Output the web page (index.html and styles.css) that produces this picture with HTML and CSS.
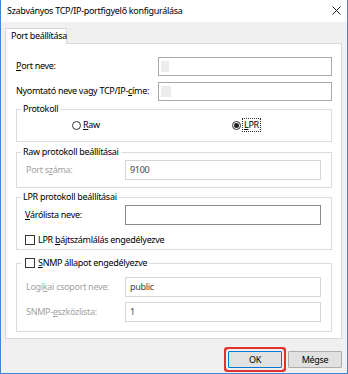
FILE: index.html
```html
<!DOCTYPE html>
<html lang="hu">
<head>
    <meta charset="UTF-8">
    <title>Szabványos TCP/IP-portfigyelő konfigurálása</title>
    <link rel="stylesheet" href="styles.css">
</head>
<body>

<div class="window">
    <div class="titlebar">
        <span class="title">Szabványos TCP/IP-portfigyelő konfigurálása</span>
        <svg class="close" width="9" height="9" viewBox="0 0 9 9">
            <path d="M0.5 0.5 L8.5 8.5 M8.5 0.5 L0.5 8.5" stroke="#222" stroke-width="1" fill="none"/>
        </svg>
    </div>

    <div class="content">
        <div class="tabs">
            <div class="tab">Port beállítása</div>
        </div>

        <div class="panel">
            <div class="top-row">
                <span class="label"><u>P</u>ort neve:</span>
                <div class="field"><span class="blur"></span></div>
            </div>
            <div class="top-row">
                <span class="label">Nyomtató neve vagy TCP/IP-<u>c</u>íme:</span>
                <div class="field"><span class="blur wide"></span></div>
            </div>

            <fieldset class="group g-proto">
                <legend>Protokoll</legend>
                <div class="radios">
                    <span class="radio-item"><span class="radio"></span><span><u>R</u>aw</span></span>
                    <span class="radio-item"><span class="radio checked"></span><span class="focus"><u>L</u>PR</span></span>
                </div>
            </fieldset>

            <fieldset class="group g-raw">
                <legend>Raw protokoll beállításai</legend>
                <div class="row">
                    <span class="label disabled">Port s<u>z</u>áma:</span>
                    <div class="field off">9100</div>
                </div>
            </fieldset>

            <fieldset class="group g-lpr">
                <legend>LPR protokoll beállításai</legend>
                <div class="row">
                    <span class="label"><u>V</u>árólista neve:</span>
                    <div class="field dark"></div>
                </div>
                <div class="check-row">
                    <span class="checkbox"></span>
                    <span>LPR <u>b</u>ájtszámlálás engedélyezve</span>
                </div>
            </fieldset>

            <fieldset class="group g-snmp">
                <legend><span class="checkbox"></span><span><u>S</u>NMP állapot engedélyezve</span></legend>
                <div class="row">
                    <span class="label disabled">Logi<u>k</u>ai csoport neve:</span>
                    <div class="field off">public</div>
                </div>
                <div class="row second">
                    <span class="label disabled">SNMP-<u>e</u>szközlista:</span>
                    <div class="field off">1</div>
                </div>
            </fieldset>
        </div>

        <div class="buttons">
            <div class="btn primary">OK</div>
            <div class="btn">Mégse</div>
        </div>
    </div>
</div>

</body>
</html>
```

FILE: styles.css
```css
body {
    margin: 0;
    font-family: "Noto Sans", "Open Sans", sans-serif;
    font-size: 9px;
    line-height: 12px;
    letter-spacing: -0.3px;
    color: #000;
}

u {
    text-decoration-thickness: 1px;
    text-underline-offset: 1px;
}

.window {
    width: 348px;
    height: 374px;
    box-sizing: border-box;
    border: 1px solid #3d87d6;
    border-top: none;
    background: #f0f0f0;
    display: flex;
    flex-direction: column;
    white-space: nowrap;
}

.titlebar {
    height: 22px;
    background: #fff;
    display: flex;
    align-items: center;
    padding: 0 6px 0 6px;
}

.title {
    flex: 1;
}

.close {
    display: block;
    margin-top: -1px;
}

.content {
    padding: 6px 5px 0 4px;
}

.tabs {
    display: flex;
}

.tab {
    position: relative;
    z-index: 1;
    width: 62px;
    height: 16px;
    box-sizing: border-box;
    border: 1px solid #d9d9d9;
    border-bottom: none;
    background: #fff;
    padding: 1px 0 0 5px;
    margin-bottom: -1px;
}

.panel {
    height: 296px;
    box-sizing: border-box;
    border: 1px solid #d9d9d9;
    background: #fff;
    padding: 13px 9px 0 10px;
}

.top-row {
    display: grid;
    grid-template-columns: 142px 1fr;
    align-items: center;
    margin-bottom: 6px;
}

.top-row .label {
    margin-top: -2px;
}

.top-row + .top-row {
    margin-bottom: 0;
}

.field {
    height: 19px;
    box-sizing: border-box;
    border: 1px solid #a9a9a9;
    background: #fff;
    padding: 0 4px;
    display: flex;
    align-items: center;
    color: #444;
}

.field .blur {
    display: block;
    width: 8px;
    height: 11px;
    margin-left: -2px;
    background: #ececec;
}

.field .blur.wide {
    width: 10px;
}

.field.off {
    height: 20px;
    border-color: #d6d6d6;
}

.field.dark {
    height: 20px;
    border-color: #8c8c8c;
}

.label.disabled {
    color: #a2a2a2;
    padding-left: 1px;
}

.group {
    margin: 0;
    min-width: 0;
    border: 1px solid #dcdcdc;
    padding: 0 10px 0 8px;
}

.group legend {
    padding: 0 2px;
    margin-left: -4px;
    line-height: 12px;
}

.g-proto {
    margin-top: 2px;
    padding-top: 4px;
    padding-bottom: 10px;
}

.g-raw {
    margin-top: 4px;
    padding-top: 2px;
    padding-bottom: 7px;
}

.g-lpr {
    margin-top: 3px;
    padding-top: 2px;
    padding-bottom: 3px;
}

.g-snmp {
    margin-top: 7px;
    padding-top: 8px;
    padding-bottom: 9px;
}

.g-snmp legend {
    display: flex;
    align-items: center;
    gap: 3px;
}

.g-snmp legend .checkbox {
    margin-left: 2px;
}

.row {
    display: grid;
    grid-template-columns: 100px 1fr;
    align-items: center;
}

.row.second {
    margin-top: 5px;
}

.radios {
    display: grid;
    grid-template-columns: 160px auto;
    padding-left: 47px;
}

.radio-item {
    display: flex;
    align-items: center;
    gap: 2px;
}

.radio {
    width: 9px;
    height: 9px;
    box-sizing: border-box;
    border: 1px solid #333;
    border-radius: 50%;
    background: #fff;
    display: flex;
    align-items: center;
    justify-content: center;
}

.radio.checked::after {
    content: "";
    width: 5px;
    height: 5px;
    border-radius: 50%;
    background: #222;
}

.focus {
    outline: 1px dotted #333;
    outline-offset: 0;
    padding: 0 1px;
}

.check-row {
    display: flex;
    align-items: center;
    gap: 3px;
    margin-top: 9px;
}

.checkbox {
    width: 10px;
    height: 10px;
    box-sizing: border-box;
    border: 1px solid #333;
    background: #fff;
}

.buttons {
    display: flex;
    justify-content: flex-end;
    gap: 6px;
    margin-top: 12px;
}

.btn {
    width: 54px;
    height: 17px;
    box-sizing: border-box;
    border: 1px solid #adadad;
    border-radius: 1px;
    background: #e1e1e1;
    display: flex;
    align-items: center;
    justify-content: center;
}

.btn.primary {
    border-color: #0078d7;
    box-shadow: 0 0 0 2px #f0f0f0, 0 0 0 4px #e0332d;
}
```
